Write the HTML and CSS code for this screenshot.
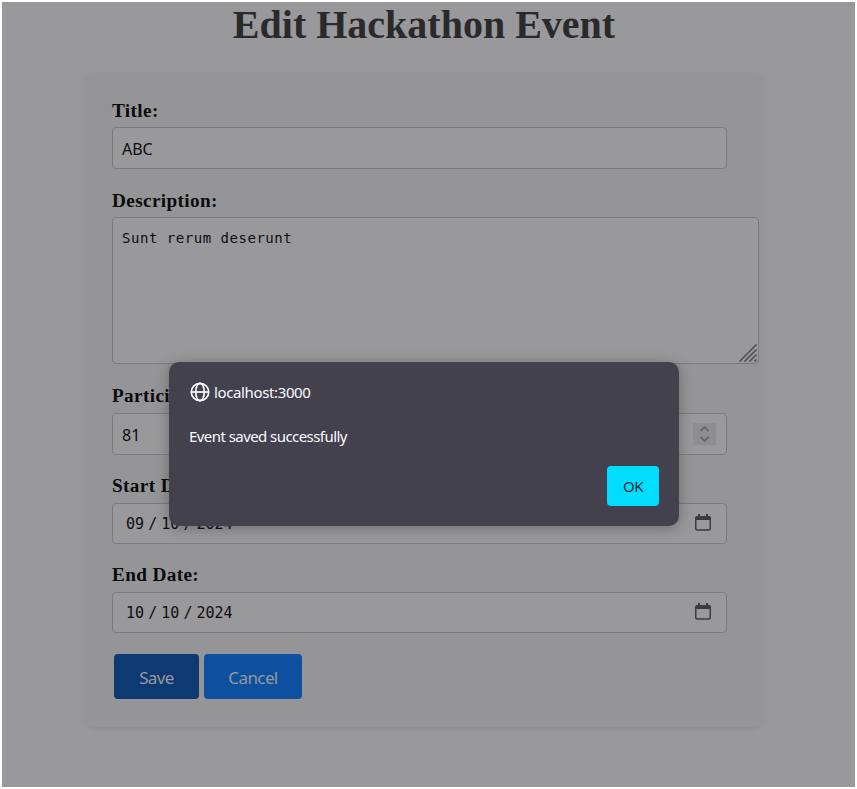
FILE: index.html
```html
<!DOCTYPE html>
<html lang="en">
<head>
<meta charset="utf-8">
<title>Edit Hackathon Event</title>
<link rel="stylesheet" href="styles.css">
</head>
<body>
<main class="page">
  <h1 class="heading"><span>Edit Hackathon Event</span></h1>
  <form class="card">
    <div class="field">
      <label class="label">Title:</label>
      <div class="control"><span class="value">ABC</span></div>
    </div>
    <div class="field">
      <label class="label">Description:</label>
      <div class="control area"><span class="mono">Sunt rerum deserunt</span>
        <svg class="grip" width="18" height="18" viewBox="0 0 18 18"><path d="M.5 17.500 17.500.5M5.500 17.500 17.500 5.500M10.500 17.500 17.500 10.500M15.500 17.500 17.500 15.500"/></svg>
      </div>
    </div>
    <div class="field compact">
      <label class="label">Participants:</label>
      <div class="control"><span class="value number">81</span>
        <svg class="spinner" width="23" height="22" viewBox="0 0 23 22"><path d="M7.500 8 11.500 4 15.500 8M7.500 14 11.500 18 15.500 14"/></svg>
      </div>
    </div>
    <div class="field compact">
      <label class="label">Start Date:</label>
      <div class="control date"><span class="digits"><span>09</span><i>/</i><span>10</span><i>/</i><span>2024</span></span>
        <svg class="calendar" width="16" height="17" viewBox="0 0 16 17"><path class="fill" d="M2 2h1V0h2v2h6V0h2v2h1q2 0 2 2v2H0V4q0-2 2-2z"/><path class="line" d="M.75 5v9.500q0 1.500 1.500 1.500h11.500q1.500 0 1.500-1.500V5"/></svg>
      </div>
    </div>
    <div class="field compact">
      <label class="label">End Date:</label>
      <div class="control date"><span class="digits"><span>10</span><i>/</i><span>10</span><i>/</i><span>2024</span></span>
        <svg class="calendar" width="16" height="17" viewBox="0 0 16 17"><path class="fill" d="M2 2h1V0h2v2h6V0h2v2h1q2 0 2 2v2H0V4q0-2 2-2z"/><path class="line" d="M.75 5v9.500q0 1.500 1.500 1.500h11.500q1.500 0 1.500-1.500V5"/></svg>
      </div>
    </div>
    <div class="actions">
      <button type="button" class="button save">Save</button>
      <button type="button" class="button cancel">Cancel</button>
    </div>
  </form>
</main>
<div class="dialog" role="alertdialog">
  <div class="origin">
    <svg width="20" height="20" viewBox="0 0 20 20"><circle cx="10" cy="10" r="8.700"/><ellipse cx="10" cy="10" rx="4.300" ry="8.700"/><path d="M1.300 10h17.400"/></svg>
    <span class="host">localhost:3000</span>
  </div>
  <p class="message"><span>Event saved successfully</span></p>
  <button type="button" class="ok">OK</button>
</div>
</body>
</html>
```
FILE: styles.css
```css
* { box-sizing: border-box; }
body {
  margin: 0;
  height: 789px;
  overflow: hidden;
  background: #fff;
  padding: 2px;
  font-family: "Liberation Serif", serif;
}
.page {
  height: 785px;
  background: #99999b;
  overflow: hidden;
}
.heading {
  margin: 0;
  height: 71px;
  color: #2a2a2c;
  font-size: 40px;
  line-height: 46px;
  text-align: center;
  padding-right: 9px;
}
.card {
  width: 676px;
  height: 654px;
  margin-left: 84px;
  padding: 26px 0 0 26px;
  border-radius: 8px;
  background: #959597;
  box-shadow: 0 2px 5px rgba(0, 0, 0, .08);
}
.field { margin-bottom: 20px; }
.label {
  display: block;
  height: 28px;
  line-height: 24px;
  font-size: 19.2px;
  font-weight: bold;
  letter-spacing: .38px;
  color: #0a0a0c;
}
.compact { margin-bottom: 19px; }
.compact .label { height: 29px; }
.control {
  display: flex;
  align-items: center;
  justify-content: space-between;
  width: 615px;
  height: 42px;
  padding: 2px 10px 0 9px;
  border: 1px solid #7b7b7d;
  border-radius: 4px;
  background: #99999b;
  color: #0d0d10;
}
.value {
  font: 16px/20px "Noto Sans", sans-serif;
}
.area {
  position: relative;
  align-items: flex-start;
  width: 647px;
  height: 147px;
  padding-top: 10px;
}
.mono {
  font: 14px/20px "DejaVu Sans Mono", monospace;
  letter-spacing: .53px;
}
.grip {
  position: absolute;
  right: 1px;
  bottom: 1px;
  fill: none;
  stroke: #4b4b4d;
  stroke-width: 1.5;
}
.spinner {
  margin-top: -2px;
  background: #8d8d92;
  fill: none;
  stroke: #66666e;
  stroke-width: 1.8;
}
.date {
  height: 41px;
  padding: 0 15px 0 13px;
}
.digits {
  display: flex;
  font: 15px/20px "DejaVu Sans Mono", monospace;
}
.digits i {
  width: 17.2px;
  font-style: normal;
  text-align: center;
}
.calendar { margin-bottom: 2px; }
.calendar .fill { fill: #3c3c3e; }
.calendar .line { fill: none; stroke: #3c3c3e; stroke-width: 1.5; }
.actions {
  display: flex;
  gap: 5px;
  padding: 2px 0 0 2px;
}
.button {
  height: 45px;
  padding: 3px 0 0;
  border: 0;
  border-radius: 4px;
  color: #99999b;
  font: 17px/20px "Noto Sans", sans-serif;
  letter-spacing: -.6px;
}
.save { width: 85px; background: #0d3a72; }
.cancel { width: 98px; background: #0c509f; }
.dialog {
  position: absolute;
  left: 169px;
  top: 362px;
  width: 510px;
  height: 164px;
  padding: 20px;
  border-radius: 10px;
  background: #42414d;
  box-shadow: 0 2px 14px rgba(20, 20, 25, .32);
  color: #fbfbfe;
  font: 15px/20px "Noto Sans", sans-serif;
}
.origin {
  display: flex;
  align-items: center;
  gap: 4px;
  height: 20px;
  padding-left: 1px;
}
.origin svg { fill: none; stroke: #fbfbfe; stroke-width: 1.7; }
.host { letter-spacing: -.37px; }
.message { margin: 24px 0 0; height: 40px; letter-spacing: -.56px; }
.ok {
  display: block;
  width: 52px;
  height: 40px;
  margin-left: auto;
  padding: 0;
  border: 0;
  border-radius: 4px;
  background: #00ddff;
  color: #2b2a33;
  font: 15px/20px "Noto Sans", sans-serif;
  letter-spacing: -.5px;
}
```
